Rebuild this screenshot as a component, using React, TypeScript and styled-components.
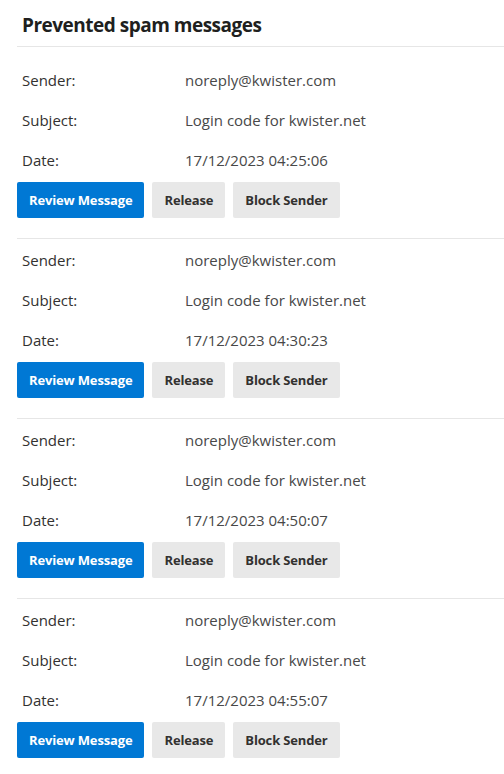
import styled, { createGlobalStyle } from "styled-components";

const GlobalStyle = createGlobalStyle`
  body {
    margin: 0;
    background: #ffffff;
    font-family: "Open Sans", "Noto Sans", sans-serif;
    color: #323130;
  }
`;

const Page = styled.div`
  padding-left: 17px;
`;
const Title = styled.h2`
  margin: 0;
  padding: 13px 0 0 5px;
  height: 46px;
  box-sizing: border-box;
  font-size: 19px;
  font-weight: 700;
  line-height: 24px;
  color: #201f1e;
  letter-spacing: -0.5px;
`;
const Divider = styled.hr`
  margin: 0;
  border: none;
  border-top: 1px solid #e6e6e6;
`;
const BlockDivider = styled(Divider)`
  margin-bottom: 1px;
`;
const MessageList = styled.div`
  padding-top: 13px;
`;
const MessageBlock = styled.div`
  padding-bottom: 20px;
`;
const InfoRow = styled.div`
  display: grid;
  grid-template-columns: 163px 1fr;
  height: 40px;
  align-items: center;
  padding-left: 5px;
  font-size: 15px;
`;
const Label = styled.span`
  color: #323130;
`;
const Value = styled.span`
  color: #484848;
`;
const Actions = styled.div`
  display: flex;
  gap: 8px;
  margin-top: 2px;
`;
const ActionButton = styled.button<{ primary?: boolean }>`
  height: 36px;
  padding: 0 12px;
  border: none;
  border-radius: 2px;
  font-family: "Open Sans", "Noto Sans", sans-serif;
  font-size: 13px;
  font-weight: 700;
  letter-spacing: -0.15px;
  background-color: ${(props) => (props.primary ? "#0078d4" : "#e8e8e8")};
  color: ${(props) => (props.primary ? "#ffffff" : "#323130")};
  cursor: pointer;
`;

const messages = [
  { sender: "noreply@kwister.com", subject: "Login code for kwister.net", date: "17/12/2023 04:25:06" },
  { sender: "noreply@kwister.com", subject: "Login code for kwister.net", date: "17/12/2023 04:30:23" },
  { sender: "noreply@kwister.com", subject: "Login code for kwister.net", date: "17/12/2023 04:50:07" },
  { sender: "noreply@kwister.com", subject: "Login code for kwister.net", date: "17/12/2023 04:55:07" },
];

function App() {
  return (
    <Page>
      <GlobalStyle />
      <Title>Prevented spam messages</Title>
      <Divider />
      <MessageList>
        {messages.map((m, i) => (
          <div key={i}>
            {i > 0 && <BlockDivider />}
            <MessageBlock>
              <InfoRow>
                <Label>Sender:</Label>
                <Value>{m.sender}</Value>
              </InfoRow>
              <InfoRow>
                <Label>Subject:</Label>
                <Value>{m.subject}</Value>
              </InfoRow>
              <InfoRow>
                <Label>Date:</Label>
                <Value>{m.date}</Value>
              </InfoRow>
              <Actions>
                <ActionButton primary>Review Message</ActionButton>
                <ActionButton>Release</ActionButton>
                <ActionButton>Block Sender</ActionButton>
              </Actions>
            </MessageBlock>
          </div>
        ))}
      </MessageList>
    </Page>
  );
}

export default App;
